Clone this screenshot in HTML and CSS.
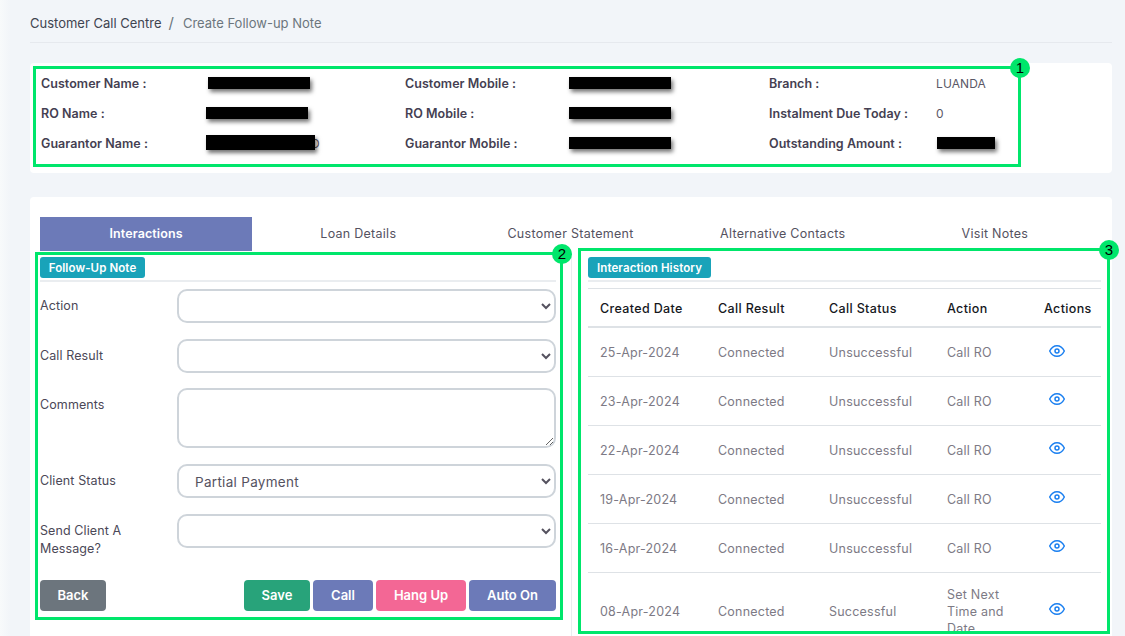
FILE: index.html
```html
<!DOCTYPE html>
<html lang="en">
<head>
<meta charset="utf-8">
<title>Create Follow-up Note</title>
<link rel="stylesheet" href="styles.css">
</head>
<body>
<main class="page">
  <nav class="crumbs">
    <span class="crumb-root">Customer Call Centre</span>
    <span class="crumb-sep">/</span>
    <span class="crumb-current">Create Follow-up Note</span>
  </nav>

  <section class="card summary">
    <div class="label">Customer Name :</div><div class="value"><span class="redact r-a"></span></div>
    <div class="label">Customer Mobile :</div><div class="value"><span class="redact"></span></div>
    <div class="label">Branch :</div><div class="value">LUANDA</div>
    <div class="label">RO Name :</div><div class="value"><span class="redact"></span></div>
    <div class="label">RO Mobile :</div><div class="value"><span class="redact"></span></div>
    <div class="label">Instalment Due Today :</div><div class="value">0</div>
    <div class="label">Guarantor Name :</div><div class="value value-row"><span class="redact r-c"></span><span class="tail">D</span></div>
    <div class="label">Guarantor Mobile :</div><div class="value"><span class="redact"></span></div>
    <div class="label">Outstanding Amount :</div><div class="value"><span class="redact r-d"></span></div>
  </section>

  <section class="card detail">
    <div class="tabs">
      <div class="tab active">Interactions</div>
      <div class="tab">Loan Details</div>
      <div class="tab">Customer Statement</div>
      <div class="tab">Alternative Contacts</div>
      <div class="tab">Visit Notes</div>
    </div>
    <div class="panes">
      <div class="pane-left">
        <div class="pill pill-note">Follow-Up Note</div>
        <div class="rule"></div>
        <div class="field"><label class="field-label">Action</label><select class="control"><option></option></select></div>
        <div class="field"><label class="field-label">Call Result</label><select class="control"><option></option></select></div>
        <div class="field field-tight"><label class="field-label">Comments</label><textarea class="control area"></textarea></div>
        <div class="field"><label class="field-label">Client Status</label><select class="control"><option>Partial Payment</option></select></div>
        <div class="field"><label class="field-label">Send Client A Message?</label><select class="control"><option></option></select></div>
        <div class="buttons">
          <button class="btn btn-back">Back</button>
          <span class="spacer"></span>
          <button class="btn btn-save">Save</button>
          <button class="btn btn-call">Call</button>
          <button class="btn btn-hang">Hang Up</button>
          <button class="btn btn-auto">Auto On</button>
        </div>
      </div>
      <div class="pane-right">
        <div class="pill pill-history">Interaction History</div>
        <div class="rule"></div>
        <table class="history">
          <colgroup><col class="c1"><col class="c2"><col class="c3"><col class="c4"><col class="c5"></colgroup>
          <thead><tr><th>Created Date</th><th>Call Result</th><th>Call Status</th><th>Action</th><th>Actions</th></tr></thead>
          <tbody>
            <tr><td>25-Apr-2024</td><td>Connected</td><td>Unsuccessful</td><td>Call RO</td><td><svg class="eye" viewBox="0 0 24 24"><path d="M1 12s4-8 11-8 11 8 11 8-4 8-11 8-11-8-11-8z"/><circle cx="12" cy="12" r="3"/></svg></td></tr>
            <tr><td>23-Apr-2024</td><td>Connected</td><td>Unsuccessful</td><td>Call RO</td><td><svg class="eye" viewBox="0 0 24 24"><path d="M1 12s4-8 11-8 11 8 11 8-4 8-11 8-11-8-11-8z"/><circle cx="12" cy="12" r="3"/></svg></td></tr>
            <tr><td>22-Apr-2024</td><td>Connected</td><td>Unsuccessful</td><td>Call RO</td><td><svg class="eye" viewBox="0 0 24 24"><path d="M1 12s4-8 11-8 11 8 11 8-4 8-11 8-11-8-11-8z"/><circle cx="12" cy="12" r="3"/></svg></td></tr>
            <tr><td>19-Apr-2024</td><td>Connected</td><td>Unsuccessful</td><td>Call RO</td><td><svg class="eye" viewBox="0 0 24 24"><path d="M1 12s4-8 11-8 11 8 11 8-4 8-11 8-11-8-11-8z"/><circle cx="12" cy="12" r="3"/></svg></td></tr>
            <tr><td>16-Apr-2024</td><td>Connected</td><td>Unsuccessful</td><td>Call RO</td><td><svg class="eye" viewBox="0 0 24 24"><path d="M1 12s4-8 11-8 11 8 11 8-4 8-11 8-11-8-11-8z"/><circle cx="12" cy="12" r="3"/></svg></td></tr>
            <tr><td>08-Apr-2024</td><td>Connected</td><td>Successful</td><td>Set Next Time and Date</td><td><svg class="eye" viewBox="0 0 24 24"><path d="M1 12s4-8 11-8 11 8 11 8-4 8-11 8-11-8-11-8z"/><circle cx="12" cy="12" r="3"/></svg></td></tr>
          </tbody>
        </table>
      </div>
    </div>
  </section>
</main>

<div class="mark mark-1"><span class="num">1</span></div>
<div class="mark mark-2"><span class="num">2</span></div>
<div class="mark mark-3"><span class="num">3</span></div>
</body>
</html>
```
FILE: styles.css
```css
* { box-sizing: border-box; }
html, body { margin: 0; height: 636px; overflow: hidden; }
body {
  background: linear-gradient(to right, #f8fafb 0, #f2f5f9 10px);
  font-family: Inter, "Noto Sans", sans-serif;
  font-size: 12.5px;
  letter-spacing: .1px;
  color: #4b4857;
  position: relative;
}
.page { padding: 0 13px 0 30px; }
.crumbs {
  height: 43px;
  display: flex;
  align-items: center;
  gap: 8px;
  border-bottom: 1px solid #e6e9ee;
  padding-top: 3px;
  margin-bottom: 20px;
  font-size: 13px;
  letter-spacing: 0;
}
.crumb-root { color: #3f4450; }
.crumb-sep { color: #6c757d; font-size: 15px; margin: 0 1px 0 -1px; }
.crumb-current { color: #6c757d; }
.card { background: #fff; border-radius: 4px; }
.summary {
  height: 110px;
  margin-bottom: 24px;
  padding: 5px 0 0 11px;
  display: grid;
  grid-template-columns: 165px 199px 164px 200px 167px 1fr;
  grid-auto-rows: 30px;
  align-items: center;
}
.label { font-weight: 600; color: #453f52; letter-spacing: .04px; }
.value { color: #5b5866; font-size: 12px; }
.value-row { display: flex; align-items: center; }
.redact {
  display: block;
  width: 102px;
  height: 12px;
  background: #000;
  box-shadow: 2px 3px 4px rgba(0,0,0,.55);
}
.r-a { margin-left: 2px; }
.r-c { width: 109px; height: 15px; margin-top: -1px; position: relative; z-index: 1; }
.r-d { width: 58px; margin-left: 1px; }
.tail { margin-left: -4px; }
.detail { height: 460px; padding: 20px 11px 0 10px; }
.tabs { display: flex; height: 34px; }
.tab {
  flex: 1;
  display: flex;
  align-items: center;
  justify-content: center;
  padding-bottom: 1px;
  letter-spacing: .27px;
  color: #55525f;
}
.tab.active { background: #6c7ab8; color: #fff; font-weight: 600; letter-spacing: .1px; }
.panes { display: grid; grid-template-columns: 532px 1fr; }
.pane-left { padding: 6px 15px 0 0; border-right: 1px solid #e9ecef; height: 400px; }
.pane-right { padding: 6px 0 0 16px; }
.pill {
  display: inline-flex;
  align-items: center;
  justify-content: center;
  height: 21px;
  border-radius: 3px;
  background: #19a3b9;
  color: #fff;
  font-weight: 600;
  font-size: 11.5px;
  vertical-align: top;
}
.pill-note { width: 105px; }
.pill-history { width: 123px; }
.rule { height: 2px; margin-top: 2px; background: #eaedf0; }
.field {
  display: grid;
  grid-template-columns: 137px 1fr;
  margin-top: 16px;
}
.rule + .field { margin-top: 7px; }
.field-tight { margin-top: 15px; }
.field-label { padding-top: 8px; line-height: 18px; color: #4b4857; }
.control {
  height: 34px;
  width: 100%;
  border: 2px solid #ced4da;
  border-radius: 10px;
  background: #fff;
  font-family: inherit;
  font-size: 13.5px;
  letter-spacing: .3px;
  color: #55525f;
  padding: 2px 12px 0;
  display: block;
}
.area { height: 60px; }
.buttons { display: flex; gap: 3px; margin-top: 22px; }
.spacer { flex: 1; }
.btn {
  height: 31px;
  border: 0;
  border-radius: 4px;
  color: #fff;
  font-family: inherit;
  font-size: 13px;
  font-weight: 600;
  padding: 0 0 2px;
}
.btn-back { width: 66px; background: #6c757d; }
.btn-save { width: 66px; background: #28a37a; }
.btn-call { width: 60px; background: #6c7ab8; }
.btn-hang { width: 90px; background: #f36795; }
.btn-auto { width: 87px; background: #6c7ab8; }
.history {
  width: 100%;
  margin-top: 6px;
  table-layout: fixed;
  border-collapse: collapse;
  letter-spacing: .22px;
}
.c1 { width: 118px; }
.c2 { width: 111px; }
.c3 { width: 118px; }
.c4 { width: 97px; }
.history th {
  height: 38px;
  padding: 2px 12px 0;
  text-align: left;
  font-weight: 500;
  letter-spacing: .35px;
  color: #16181d;
  border-top: 1px solid #dee2e6;
  border-bottom: 2px solid #dee2e6;
}
.history td {
  height: 49px;
  padding: 0 12px;
  color: #7d7a85;
  line-height: 17px;
  border-bottom: 1px solid #dee2e6;
}
.history tr:first-child td { height: 50px; padding-top: 2px; }
.history tr:last-child td { height: 78px; }
.eye {
  display: block;
  width: 16px;
  height: 16px;
  margin: -5px 0 0 5px;
  fill: none;
  stroke: #1a7ff0;
  stroke-width: 2.2;
}
.history tr:first-child .eye { margin-top: -4px; }
.mark {
  position: absolute;
  border: 3px solid #00e66b;
}
.mark-1 { left: 33px; top: 66px; width: 988px; height: 101px; }
.mark-2 { left: 35px; top: 252px; width: 528px; height: 368px; }
.mark-3 { left: 578px; top: 248px; width: 532px; height: 386px; }
.num {
  position: absolute;
  top: -11px;
  right: -12px;
  width: 20px;
  height: 20px;
  border-radius: 50%;
  background: #00e66b;
  color: #000;
  font: 15px/20px "Liberation Sans", sans-serif;
  text-align: center;
}
```
